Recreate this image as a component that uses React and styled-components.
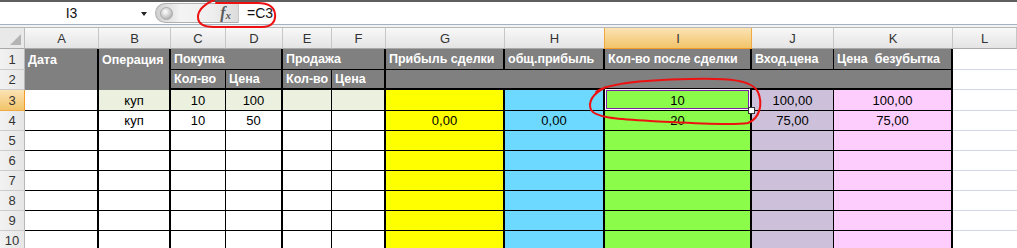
import React from "react";
import styled, { createGlobalStyle, css } from "styled-components";

const COLUMNS = [
  { key: "A", width: 74 },
  { key: "B", width: 72 },
  { key: "C", width: 55 },
  { key: "D", width: 57 },
  { key: "E", width: 49 },
  { key: "F", width: 54 },
  { key: "G", width: 119 },
  { key: "H", width: 100 },
  { key: "I", width: 147 },
  { key: "J", width: 82 },
  { key: "K", width: 119 },
  { key: "L", width: 64 },
];

const FILL = {
  head: "#808080",
  op: "#ebf1de",
  yellow: "#ffff00",
  blue: "#6dd9ff",
  green: "#8cfc4b",
  lilac: "#cdc0da",
  pink: "#fdcdfd",
  white: "#ffffff",
};

// right border width for body rows, per column
const BODY_RIGHT = { A: 2, B: 2, C: 1, D: 2, E: 1, F: 2, G: 2, H: 2, I: 2, J: 1, K: 2 };
const BODY_FILL = { G: "yellow", H: "blue", I: "green", J: "lilac", K: "pink" };

const DATA = {
  3: { B: "куп", C: "10", D: "100", I: "10", J: "100,00", K: "100,00" },
  4: { B: "куп", C: "10", D: "50", G: "0,00", H: "0,00", I: "20", J: "75,00", K: "75,00" },
};

const GlobalStyle = createGlobalStyle`
  body {
    margin: 0;
    background: #fff;
    font-family: "Liberation Sans", Arial, sans-serif;
  }
`;

function App() {
  const bodyRows = [3, 4, 5, 6, 7, 8, 9, 10];

  return (
    <Page>
      <GlobalStyle />
      <FormulaBar>
        <NameBox>
          <span>I3</span>
          <DropArrow />
        </NameBox>
        <FxPill>
          <Knob />
          <FxLabel>
            <i>f</i>
            <sub>x</sub>
          </FxLabel>
        </FxPill>
        <FormulaInput>=C3</FormulaInput>
      </FormulaBar>
      <BarGap />

      <Sheet>
        <Corner>
          <CornerTriangle />
        </Corner>
        {COLUMNS.map((c) => (
          <ColHead key={c.key} $active={c.key === "I"}>
            {c.key}
          </ColHead>
        ))}

        <RowHead>1</RowHead>
        <Cell $bg="head" $r={2} $rows={2} $head $top>Дата</Cell>
        <Cell $bg="head" $r={2} $rows={2} $head $top>Операция</Cell>
        <Cell $bg="head" $r={2} $b={1} $cols={2} $head>Покупка</Cell>
        <Cell $bg="head" $r={2} $b={1} $cols={2} $head>Продажа</Cell>
        <Cell $bg="head" $r={2} $b={1} $head>Прибыль сделки</Cell>
        <Cell $bg="head" $r={2} $b={1} $head>общ.прибыль</Cell>
        <Cell $bg="head" $r={2} $b={1} $head>Кол-во после сделки</Cell>
        <Cell $bg="head" $r={1} $b={1} $head>Вход.цена</Cell>
        <Cell $bg="head" $r={2} $b={1} $head>Цена&nbsp; безубытка</Cell>
        <Cell $grid />

        <RowHead>2</RowHead>
        <Cell $bg="head" $r={1} $b={2} $head>Кол-во</Cell>
        <Cell $bg="head" $r={2} $b={2} $head>Цена</Cell>
        <Cell $bg="head" $r={1} $b={2} $head>Кол-во</Cell>
        <Cell $bg="head" $r={2} $b={2} $head>Цена</Cell>
        <Cell $bg="head" $r={2} $b={2} $cols={5} />
        <Cell $grid />

        {bodyRows.map((row) => (
          <React.Fragment key={row}>
            <RowHead $active={row === 3}>{row}</RowHead>
            {COLUMNS.map((c) => {
              if (c.key === "L") return <Cell key={c.key} $grid />;
              let bg = BODY_FILL[c.key] || "white";
              if (row === 3 && "BCDEF".includes(c.key)) bg = "op";
              const selected = row === 3 && c.key === "I";
              const value = (DATA[row] || {})[c.key];
              return (
                <Cell
                  key={c.key}
                  $bg={bg}
                  $r={BODY_RIGHT[c.key]}
                  $b={1}
                  $center
                  $selected={selected}
                >
                  {value}
                  {selected && <FillHandle />}
                </Cell>
              );
            })}
          </React.Fragment>
        ))}
      </Sheet>

      <Marks viewBox="0 0 1017 248" width="1017" height="248">
        <path d="M214 0 C205 4 198 9 198 17 C198 24 204 27 214 27 L262 27 C271 27 276 22 275 14 C274 6 268 3 258 3 L216 3" />
        <path d="M596 92 C606 84 640 80 690 79 C730 78 752 80 758 92 C763 104 760 118 748 123 C730 126 690 123 650 121 C620 119 596 118 591 110 C588 102 592 94 606 87" />
      </Marks>
    </Page>
  );
}

export default App;

const Page = styled.div`
  position: relative;
  width: 1017px;
  height: 248px;
  overflow: hidden;
  background: #fff;
`;

const FormulaBar = styled.div`
  display: flex;
  height: 22px;
  border-top: 2px solid #5e5e5e;
  border-bottom: 1px solid #a3b1c2;
  background: #fff;
  font-size: 14px;
  color: #111;
`;

const NameBox = styled.div`
  position: relative;
  display: flex;
  align-items: center;
  justify-content: center;
  width: 155px;
  padding-right: 12px;
  box-sizing: border-box;
`;

const DropArrow = styled.span`
  position: absolute;
  right: 8px;
  top: 10px;
  border-left: 3px solid transparent;
  border-right: 3px solid transparent;
  border-top: 4px solid #222;
`;

const FxPill = styled.div`
  display: flex;
  align-items: center;
  justify-content: space-between;
  width: 84px;
  margin: 1px 0;
  padding: 0 7px 0 4px;
  box-sizing: border-box;
  border: 1px solid #b0b0b0;
  border-right-color: #c8c8c8;
  border-radius: 11px 0 0 11px;
  background: linear-gradient(90deg, #cfcfcf 0%, #f4f4f4 30%, #eeeeee 70%, #dcdcdc 100%);
`;

const Knob = styled.span`
  width: 11px;
  height: 11px;
  border-radius: 50%;
  background: radial-gradient(circle at 40% 35%, #ffffff 0%, #c9c9c9 55%, #9a9a9a 100%);
  border: 1px solid #a9a9a9;
`;

const FxLabel = styled.span`
  font-family: "Liberation Serif", "Times New Roman", serif;
  font-weight: bold;
  font-style: italic;
  font-size: 16px;
  color: #5a5a5a;

  sub {
    font-size: 11px;
    vertical-align: -1px;
  }
`;

const FormulaInput = styled.div`
  flex: 1;
  display: flex;
  align-items: center;
  padding-left: 8px;
`;

const BarGap = styled.div`
  height: 2px;
  background: #f2f2f2;
  border-bottom: 1px solid #b9b9b9;
`;

const Sheet = styled.div`
  display: grid;
  grid-template-columns: 25px ${COLUMNS.map((c) => `${c.width}px`).join(" ")};
  grid-template-rows: 21px 21px 20px 21px repeat(7, 20px);
  font-size: 13px;
`;

const Corner = styled.div`
  position: relative;
  background: #e9e9e9;
  border-right: 1px solid #bcbcbc;
  border-bottom: 1px solid #a9a9a9;
`;

const CornerTriangle = styled.span`
  position: absolute;
  right: 3px;
  bottom: 3px;
  border-left: 11px solid transparent;
  border-bottom: 11px solid #b4b4b4;
`;

const ColHead = styled.div`
  display: flex;
  align-items: center;
  justify-content: center;
  padding-top: 1px;
  box-sizing: border-box;
  color: #333;
  background: linear-gradient(#f8f8f8, #e4e4e4);
  border-right: 1px solid #c6c6c6;
  border-bottom: 1px solid #a9a9a9;

  ${(p) =>
    p.$active &&
    css`
      background: linear-gradient(#fbe3b4, #f2c46a);
      border-right-color: #f0a840;
      border-bottom-color: #f29b2a;
      border-left: 1px solid #f0a840;
      margin-left: -1px;
    `}
`;

const RowHead = styled.div`
  display: flex;
  align-items: center;
  justify-content: center;
  box-sizing: border-box;
  color: #333;
  background: linear-gradient(90deg, #f2f2f2, #e6e6e6);
  border-right: 1px solid #b8b8b8;
  border-bottom: 1px solid #cbcbcb;

  ${(p) =>
    p.$active &&
    css`
      background: linear-gradient(#fbe3b4, #f2c46a);
      border-right-color: #f29b2a;
      border-bottom-color: #f0a840;
    `}
`;

const Cell = styled.div`
  position: relative;
  display: flex;
  align-items: ${(p) => (p.$top ? "flex-start" : p.$head ? "center" : "flex-end")};
  justify-content: ${(p) => (p.$center ? "center" : "flex-start")};
  box-sizing: border-box;
  min-width: 0;
  padding: ${(p) => (p.$top ? "4px 3px 0" : "0 3px 2px")};
  white-space: nowrap;
  overflow: visible;
  background: ${(p) => FILL[p.$bg] || "#fff"};
  color: ${(p) => (p.$head ? "#fff" : "#000")};
  font-weight: ${(p) => (p.$head ? "bold" : "normal")};
  font-size: ${(p) => (p.$head ? "12.5px" : "13px")};
  border-right: ${(p) => (p.$r ? `${p.$r}px solid #000` : "0")};
  border-bottom: ${(p) => (p.$b ? `${p.$b}px solid #000` : "0")};
  grid-column: ${(p) => (p.$cols ? `span ${p.$cols}` : "auto")};
  grid-row: ${(p) => (p.$rows ? `span ${p.$rows}` : "auto")};

  ${(p) =>
    p.$head &&
    !p.$top &&
    css`
      padding-bottom: 0;
    `}

  ${(p) =>
    p.$grid &&
    css`
      border-bottom: 1px solid #d0d7e5;
    `}

  ${(p) =>
    p.$selected &&
    css`
      box-shadow: inset 0 0 0 1px #fff, inset 0 0 0 2px #7a22a8;
      margin-top: -1px;
    `}
`;

const FillHandle = styled.span`
  position: absolute;
  right: -5px;
  bottom: -4px;
  width: 5px;
  height: 5px;
  background: #fff;
  border: 1px solid #333;
  z-index: 2;
`;

const Marks = styled.svg`
  position: absolute;
  left: 0;
  top: 0;
  pointer-events: none;

  path {
    fill: none;
    stroke: #ee1111;
    stroke-width: 2;
    stroke-linecap: round;
    stroke-linejoin: round;
  }
`;
